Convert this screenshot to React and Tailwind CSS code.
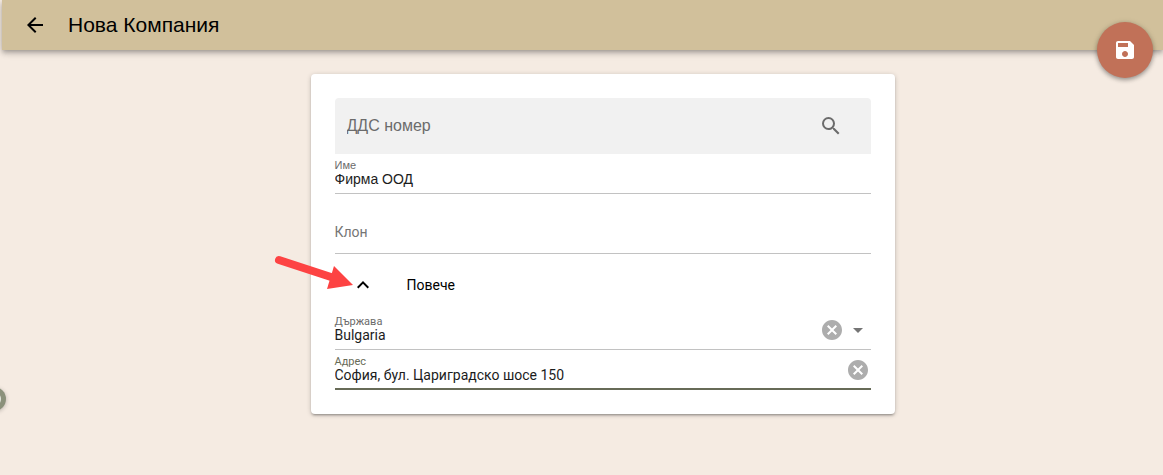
import React, { useState } from "react";

const paths = {
  back: "M20 11H7.83l5.59-5.59L12 4l-8 8 8 8 1.41-1.41L7.83 13H20v-2z",
  save: "M17 3H5c-1.11 0-2 .9-2 2v14c0 1.1.89 2 2 2h14c1.1 0 2-.9 2-2V7l-4-4zm-5 16c-1.66 0-3-1.34-3-3s1.34-3 3-3 3 1.34 3 3-1.34 3-3 3zm3-10H5V5h10v4z",
  search:
    "M15.5 14h-.79l-.28-.27A6.471 6.471 0 0 0 16 9.5 6.5 6.5 0 1 0 9.5 16c1.61 0 3.09-.59 4.23-1.57l.27.28v.79l5 4.99L20.49 19l-4.99-5zm-6 0C7.01 14 5 11.99 5 9.5S7.01 5 9.5 5 14 7.01 14 9.5 11.99 14 9.5 14z",
  cancel:
    "M12 2C6.47 2 2 6.47 2 12s4.47 10 10 10 10-4.47 10-10S17.53 2 12 2zm5 13.59L15.59 17 12 13.41 8.41 17 7 15.59 10.59 12 7 8.41 8.41 7 12 10.59 15.59 7 17 8.41 13.41 12 17 15.59z",
  drop: "M7 10l5 5 5-5z",
  less: "M12 8l-6 6 1.41 1.41L12 10.83l4.59 4.58L18 14z",
};

function Icon({ name, className = "" }) {
  return (
    <svg viewBox="0 0 24 24" fill="currentColor" aria-hidden="true" className={`size-6 shrink-0 ${className}`}>
      <path d={paths[name]} />
    </svg>
  );
}

function ClearButton({ label, onClick }) {
  return (
    <button type="button" aria-label={label} onClick={onClick} className="text-[#adadad]">
      <Icon name="cancel" />
    </button>
  );
}

const labelText = "text-[11px]";
const valueText = "h-4 w-full bg-transparent text-sm leading-4 text-[#1c1c1c] outline-none";

export default function App() {
  const [name, setName] = useState("Фирма ООД");
  const [country, setCountry] = useState("Bulgaria");
  const [address, setAddress] = useState("София, бул. Цариградско шосе 150");
  const [open, setOpen] = useState(true);

  return (
    <div className="relative min-h-screen overflow-hidden bg-[#f5ebe2] font-['Roboto','Liberation_Sans',sans-serif] text-black">
      <header className="ml-0.5 flex h-[50px] items-center gap-[21px] bg-[#d1c09b] pl-[21px] shadow-[0_2px_4px_-1px_rgba(0,0,0,0.2),0_4px_5px_rgba(0,0,0,0.14),0_1px_10px_rgba(0,0,0,0.12)]">
        <button type="button" aria-label="Назад">
          <Icon name="back" />
        </button>
        <h1 className="font-['Liberation_Sans',sans-serif] text-[21px] leading-6">Нова Компания</h1>
      </header>

      <button
        type="submit"
        form="company"
        aria-label="Запази"
        className="absolute top-[22px] right-2.5 flex size-14 items-center justify-center rounded-full bg-[#c17158] text-white shadow-[0_2px_4px_rgba(0,0,0,0.3),0_1px_6px_rgba(0,0,0,0.15)]"
      >
        <Icon name="save" />
      </button>

      <main className="pt-6 pr-4 pb-10 pl-[58px]">
        <form
          id="company"
          onSubmit={(e) => e.preventDefault()}
          className="relative mx-auto max-w-[584px] rounded bg-white p-6 shadow-[0_1px_5px_rgba(0,0,0,0.2),0_2px_2px_rgba(0,0,0,0.14),0_3px_1px_-2px_rgba(0,0,0,0.12)]"
        >
          <div className="flex h-14 items-center rounded-t bg-[#f1f1f1] pr-7 pl-3">
            <input
              type="text"
              aria-label="ДДС номер"
              placeholder="ДДС номер"
              className="min-w-0 flex-1 bg-transparent font-['Liberation_Sans',sans-serif] text-base outline-none placeholder:text-[#6b6b6b]"
            />
            <button type="button" aria-label="Търсене" className="text-[#6b6b6b]">
              <Icon name="search" />
            </button>
          </div>

          <div className="flex h-10 flex-col border-b border-[#c2c2c2] pt-[5px]">
            <label
              htmlFor="name"
              className={`${labelText} font-['Liberation_Sans',sans-serif] leading-3 text-[#6b6b6b]`}
            >
              Име
            </label>
            <input
              id="name"
              value={name}
              onChange={(e) => setName(e.target.value)}
              className={`${valueText} font-['Liberation_Sans',sans-serif]`}
            />
          </div>

          <div className="mt-5 flex h-10 items-center border-b border-[#c2c2c2] pb-1">
            <input aria-label="Клон" placeholder="Клон" className={`${valueText} placeholder:text-[#757575]`} />
          </div>

          <button
            type="button"
            aria-expanded={open}
            onClick={() => setOpen(!open)}
            className="flex h-14 w-full items-center gap-8 pt-2.5 pb-1 pl-4 text-sm"
          >
            <Icon name="less" />
            Повече
          </button>

          {open && (
            <div>
              <div className="flex h-10 items-center gap-0.5 border-b border-[#c2c2c2] pr-px">
                <div className="flex min-w-0 flex-1 flex-col self-start pt-1.5">
                  <label htmlFor="country" className={`${labelText} leading-[11px] text-[#6b6b6b]`}>
                    Държава
                  </label>
                  <select
                    id="country"
                    value={country}
                    onChange={(e) => setCountry(e.target.value)}
                    className={`${valueText} appearance-none`}
                  >
                    <option value=""></option>
                    <option>Bulgaria</option>
                  </select>
                </div>
                <ClearButton label="Изчисти държава" onClick={() => setCountry("")} />
                <Icon name="drop" className="text-[#757575]" />
              </div>

              <div className="flex h-10 items-start border-b-2 border-[#676b57] pr-px">
                <div className="flex min-w-0 flex-1 flex-col pt-1.5">
                  <label htmlFor="address" className={`${labelText} leading-[11px] text-[#676b57]`}>
                    Адрес
                  </label>
                  <input
                    id="address"
                    value={address}
                    onChange={(e) => setAddress(e.target.value)}
                    className={valueText}
                  />
                </div>
                <div className="flex pt-2">
                  <ClearButton label="Изчисти адрес" onClick={() => setAddress("")} />
                </div>
              </div>
            </div>
          )}

          <svg
            viewBox="0 0 82 38"
            aria-hidden="true"
            className="pointer-events-none absolute top-[179px] -left-[38px] h-[38px] w-[82px]"
          >
            <path d="M6 7L58 24" stroke="#fd4343" strokeWidth="8" strokeLinecap="round" />
            <path d="M61 13L80 32L54 36Z" fill="#fd4343" />
          </svg>
        </form>
      </main>

      <button
        type="button"
        aria-label="Настройки"
        className="absolute bottom-16 -left-[18px] flex size-6 items-center justify-center rounded-full bg-[#8b917b] shadow-[0_1px_4px_rgba(0,0,0,0.25)]"
      >
        <span className="block size-3.5 rounded-full bg-[#e2e5dc]" />
      </button>
    </div>
  );
}
